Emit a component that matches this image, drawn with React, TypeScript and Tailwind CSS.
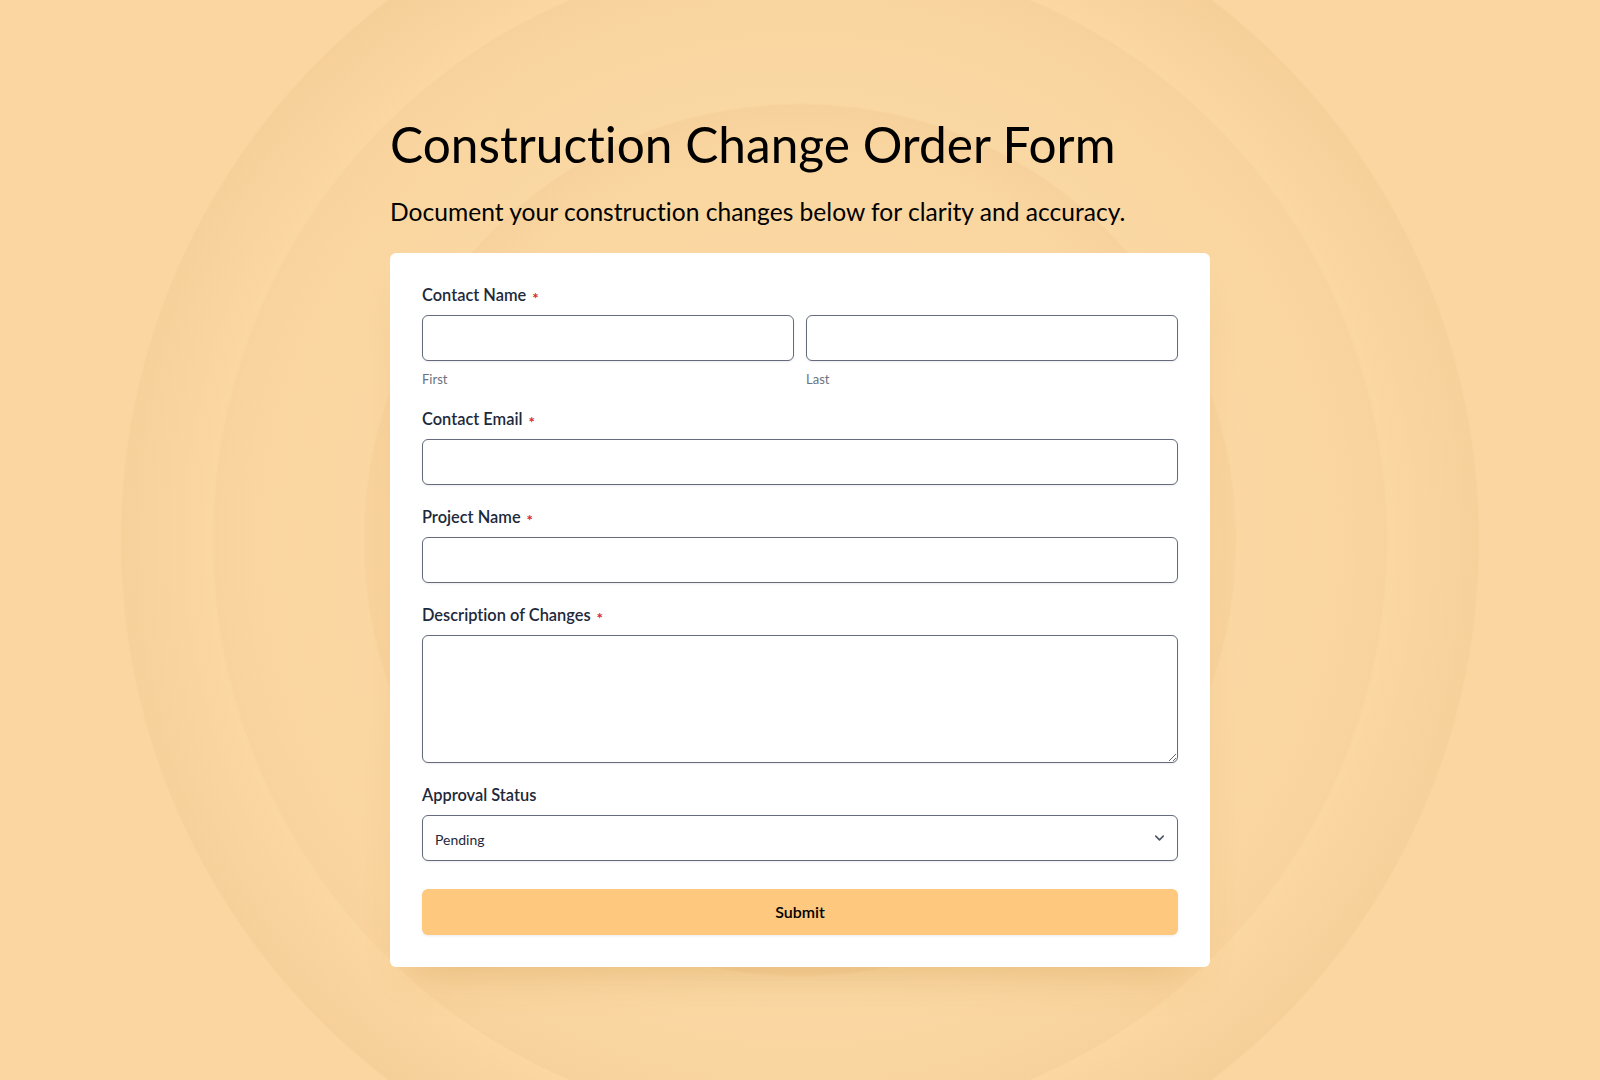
import React from "react";
import { ChevronDown } from "lucide-react";

type FieldProps = {
  label: string;
  required?: boolean;
  children: React.ReactNode;
};

const Field: React.FC<FieldProps> = ({ label, required, children }) => (
  <div className="flex flex-col">
    <label className="mb-2 flex items-center text-[16.4px] leading-6 font-semibold text-[#1e293b]">
      {label}
      {required && (
        <span className="ml-[6px] translate-y-[3px] text-[15px] leading-none font-bold text-[#dc2626]">*</span>
      )}
    </label>
    {children}
  </div>
);

const inputCls =
  "h-[46px] w-full rounded-md border border-[#646b7a] bg-white px-3 text-[14px] text-[#1e293b] shadow-[0_1px_2px_rgba(0,0,0,0.08)] outline-none";

export default function App() {
  const [status, setStatus] = React.useState("Pending");

  return (
    <div className="min-h-screen w-full bg-[#fad6a0] bg-[linear-gradient(to_right,rgba(251,214,160,0.6),rgba(251,214,160,0.35)_22%,rgba(251,214,160,0)_38%,rgba(251,214,160,0)_62%,rgba(251,214,160,0.35)_78%,rgba(251,214,160,0.6)),radial-gradient(circle_at_50%_50%,#fbd8a3_0px,#fad7a1_380px,#f7d19b_435px,#fad8a3_437px,#f9d59f_540px,#f7d19b_586px,#fbd7a1_588px,#f7d19b_640px,#f3cc95_678px,#fbd6a0_680px)] font-['Lato',sans-serif] [font-variant-ligatures:none]">
      <div className="mx-auto w-[820px] pt-[115px] pb-[112px]">
        {/* Header */}
        <h1 className="text-[49.6px] leading-[59px] font-normal text-black">
          Construction Change Order Form
        </h1>
        <p className="mt-[22px] text-[24.6px] leading-8 text-black">
          Document your construction changes below for clarity and accuracy.
        </p>

        {/* Form card */}
        <form
          className="mt-[25px] flex flex-col gap-5 rounded-md bg-white px-8 pt-[30px] pb-8 shadow-[0_24px_40px_-24px_rgba(200,140,60,0.45)]"
          onSubmit={(e) => e.preventDefault()}
        >
          <Field label="Contact Name" required>
            <div className="grid grid-cols-2 gap-3">
              <div className="flex flex-col">
                <input className={inputCls} />
                <span className="mt-2.5 text-[13px] leading-4 text-[#6b7280]">First</span>
              </div>
              <div className="flex flex-col">
                <input className={inputCls} />
                <span className="mt-2.5 text-[13px] leading-4 text-[#6b7280]">Last</span>
              </div>
            </div>
          </Field>

          <Field label="Contact Email" required>
            <input type="email" className={inputCls} />
          </Field>

          <Field label="Project Name" required>
            <input className={inputCls} />
          </Field>

          <Field label="Description of Changes" required>
            <textarea className="block h-[128px] w-full rounded-md border border-[#646b7a] bg-white px-3 py-2 text-[14px] text-[#1e293b] shadow-[0_1px_2px_rgba(0,0,0,0.08)] outline-none" />
          </Field>

          <Field label="Approval Status">
            <div className="relative">
              <select
                value={status}
                onChange={(e) => setStatus(e.target.value)}
                className={inputCls + " appearance-none pt-[3px] pr-10"}
              >
                <option>Pending</option>
                <option>Approved</option>
                <option>Rejected</option>
              </select>
              <ChevronDown
                size={15}
                strokeWidth={2.5}
                className="pointer-events-none absolute top-1/2 right-[11px] -translate-y-1/2 text-[#4b5563]"
              />
            </div>
          </Field>

          <button
            type="submit"
            className="mt-[8px] h-[46px] w-full rounded-md bg-[#fec87e] text-[16px] font-semibold text-black shadow-[0_1px_3px_rgba(0,0,0,0.08)]"
          >
            Submit
          </button>
        </form>
      </div>
    </div>
  );
}
